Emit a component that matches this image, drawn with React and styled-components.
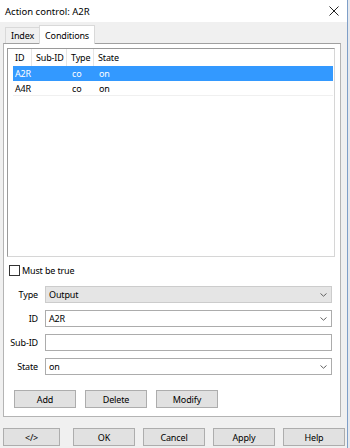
import React from 'react';
import styled, { createGlobalStyle } from 'styled-components';

const GlobalStyle = createGlobalStyle`
  html, body {
    margin: 0;
    padding: 0;
    background: #e6e9ee;
  }
  body {
    font-family: 'Noto Sans', 'Liberation Sans', sans-serif;
    font-size: 9px;
    letter-spacing: -0.15px;
    color: #000000;
  }
`;

const Window = styled.div`
  width: 347px;
  height: 448px;
  border-right: 1px solid #7f9fc8;
  background: #f0f0f0;
  display: flex;
  flex-direction: column;
  overflow: hidden;
`;

const TitleBar = styled.div`
  height: 22px;
  flex: none;
  background: #ffffff;
  display: flex;
  align-items: center;
  justify-content: space-between;
  padding: 0 8px 0 5px;
  box-sizing: border-box;
  font-size: 9.5px;
  letter-spacing: 0;
`;

const Body = styled.div`
  flex: 1;
  padding: 3px 0 0 3px;
  display: flex;
  flex-direction: column;
`;

const TabStrip = styled.div`
  display: flex;
  align-items: flex-end;
  height: 18px;
  padding-left: 2px;
`;

const Tab = styled.div`
  height: ${(p) => (p.$active ? '19px' : '16px')};
  margin-bottom: ${(p) => (p.$active ? '-1px' : '0')};
  padding: 0 5px;
  display: flex;
  align-items: center;
  box-sizing: border-box;
  background: ${(p) => (p.$active ? '#ffffff' : '#f0f0f0')};
  border: 1px solid #d9d9d9;
  border-bottom: none;
  border-right: ${(p) => (p.$active ? '1px solid #d9d9d9' : 'none')};
  position: relative;
  z-index: ${(p) => (p.$active ? 1 : 0)};
`;

const Panel = styled.div`
  width: 338px;
  height: 374px;
  box-sizing: border-box;
  background: #ffffff;
  border: 1px solid #b4b4b4;
  border-top-color: #a0a0a0;
  padding: 4px 5px 0 3px;
  display: flex;
  flex-direction: column;
`;

const List = styled.div`
  height: 209px;
  box-sizing: border-box;
  border: 1px solid #9a9a9a;
  border-right-color: #d6d6d6;
  border-bottom-color: #d6d6d6;
  background: #ffffff;
`;

const HeaderRow = styled.div`
  display: grid;
  grid-template-columns: 24px 35px 27px 1fr;
  height: 17px;
  align-items: center;
`;

const HeaderCell = styled.div`
  height: 100%;
  display: flex;
  align-items: center;
  padding-left: 4px;
  border-right: ${(p) => (p.$last ? 'none' : '1px solid #e5e5e5')};

  &:first-child {
    padding-left: 7px;
  }
`;

const Row = styled.div`
  display: grid;
  grid-template-columns: 19px 35px 27px 1fr;
  height: 14px;
  align-items: center;
  margin: 0 1px 0 5px;
  background: ${(p) => (p.$selected ? '#3399ff' : 'transparent')};
  color: ${(p) => (p.$selected ? '#ffffff' : '#000000')};
  border-bottom: 1px solid ${(p) => (p.$selected ? '#3399ff' : '#f0f0f0')};
`;

const Cell = styled.div`
  padding-left: 5px;
  white-space: nowrap;

  &:first-child {
    padding-left: 2px;
  }
`;

const CheckRow = styled.label`
  display: flex;
  align-items: center;
  gap: 2px;
  margin: 8px 0 0 2px;
  height: 11px;
`;

const Box = styled.span`
  width: 11px;
  height: 11px;
  box-sizing: border-box;
  border: 1px solid #333333;
  background: #ffffff;
`;

const Form = styled.div`
  margin-top: 10px;
  display: grid;
  grid-template-columns: 31px 1fr;
  column-gap: 7px;
  row-gap: 7px;
  padding-right: 3px;
  align-items: center;
`;

const Label = styled.div`
  text-align: right;
`;

const Field = styled.div`
  height: 17px;
  box-sizing: border-box;
  border: 1px solid ${(p) => (p.$disabled ? '#cccccc' : '#acacac')};
  background: ${(p) => (p.$disabled ? '#e5e5e5' : '#ffffff')};
  display: flex;
  align-items: center;
  justify-content: space-between;
  padding: 0 4px 0 3px;
`;

const ButtonRow = styled.div`
  display: flex;
  gap: 9px;
  margin: 15px 0 0 7px;
`;

const Button = styled.button`
  width: ${(p) => p.$w || 62}px;
  height: 18px;
  box-sizing: border-box;
  border: 1px solid #adadad;
  background: #e1e1e1;
  font-family: inherit;
  font-size: 9px;
  letter-spacing: inherit;
  color: #000000;
  padding: 0;
`;

const Footer = styled.div`
  display: flex;
  margin-top: 11px;
`;

const FooterGroup = styled.div`
  display: flex;
  gap: 8px;
  margin-left: 13px;
`;

const Chevron = () => (
  <svg width="7" height="4" viewBox="0 0 7 4">
    <path d="M0.5 0.5 L3.5 3.2 L6.5 0.5" fill="none" stroke="#606060" strokeWidth="1" />
  </svg>
);

const CloseIcon = () => (
  <svg width="10" height="10" viewBox="0 0 10 10">
    <path d="M0.5 0.5 L9.5 9.5 M9.5 0.5 L0.5 9.5" stroke="#222" strokeWidth="1" />
  </svg>
);

const rows = [
  { id: 'A2R', sub: '', type: 'co', state: 'on', selected: true },
  { id: 'A4R', sub: '', type: 'co', state: 'on' },
];

const App = () => (
  <>
    <GlobalStyle />
    <Window>
      <TitleBar>
        <span>Action control: A2R</span>
        <CloseIcon />
      </TitleBar>
      <Body>
        <TabStrip>
          <Tab>Index</Tab>
          <Tab $active>Conditions</Tab>
        </TabStrip>
        <Panel>
          <List>
            <HeaderRow>
              <HeaderCell>ID</HeaderCell>
              <HeaderCell>Sub-ID</HeaderCell>
              <HeaderCell>Type</HeaderCell>
              <HeaderCell $last>State</HeaderCell>
            </HeaderRow>
            {rows.map((r) => (
              <Row key={r.id} $selected={r.selected}>
                <Cell>{r.id}</Cell>
                <Cell>{r.sub}</Cell>
                <Cell>{r.type}</Cell>
                <Cell>{r.state}</Cell>
              </Row>
            ))}
          </List>
          <CheckRow>
            <Box />
            Must be true
          </CheckRow>
          <Form>
            <Label>Type</Label>
            <Field $disabled>
              Output
              <Chevron />
            </Field>
            <Label>ID</Label>
            <Field>
              A2R
              <Chevron />
            </Field>
            <Label>Sub-ID</Label>
            <Field />
            <Label>State</Label>
            <Field>
              on
              <Chevron />
            </Field>
          </Form>
          <ButtonRow>
            <Button>Add</Button>
            <Button>Delete</Button>
            <Button>Modify</Button>
          </ButtonRow>
        </Panel>
        <Footer>
          <Button $w={57}>&lt;/&gt;</Button>
          <FooterGroup>
            <Button>OK</Button>
            <Button>Cancel</Button>
            <Button>Apply</Button>
            <Button>Help</Button>
          </FooterGroup>
        </Footer>
      </Body>
    </Window>
  </>
);

export default App;
